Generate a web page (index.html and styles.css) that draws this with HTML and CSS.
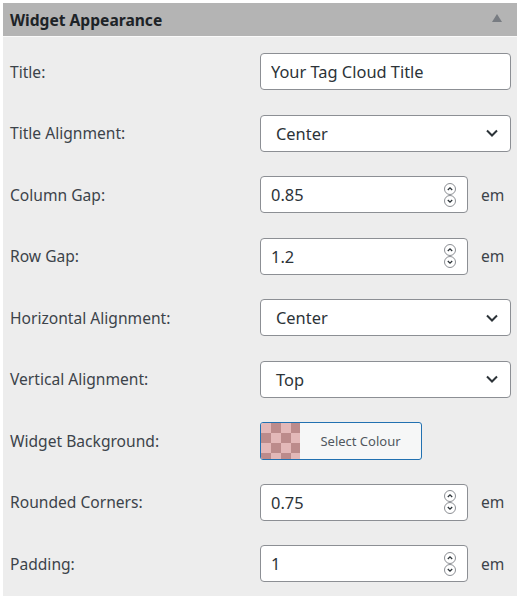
FILE: index.html
```html
<!DOCTYPE html>
<html>
<head>
<meta charset="utf-8">
<link rel="stylesheet" href="styles.css">
</head>
<body>
<div class="panel">
  <div class="panel-head">
    <h2 class="panel-title">Widget Appearance</h2>
    <svg class="toggle" width="10" height="8" viewBox="0 0 10 8"><path d="M5 0 L10 8 L0 8 Z" fill="#787c82"/></svg>
  </div>
  <div class="panel-body">
    <div class="row">
      <label class="label">Title:</label>
      <div class="field wide"><input class="text-input" type="text" value="Your Tag Cloud Title"></div>
    </div>
    <div class="row">
      <label class="label">Title Alignment:</label>
      <div class="field wide select"><span class="sel-val">Center</span>
        <svg class="chev" width="14" height="10" viewBox="0 0 14 10"><path d="M2 2.5 L7 7.5 L12 2.5" fill="none" stroke="#2c3338" stroke-width="2"/></svg></div>
    </div>
    <div class="row">
      <label class="label">Column Gap:</label>
      <div class="num-wrap">
        <div class="field num"><span class="num-val">0.85</span>
          <svg class="spin" width="14" height="26" viewBox="0 0 14 26"><rect x="1.5" y="1.5" width="11" height="11" rx="5.5" fill="none" stroke="#8c8f94"/><path d="M4.8 8 L7 5.8 L9.2 8" fill="none" stroke="#2c3338" stroke-width="1.3"/><rect x="1.5" y="13.5" width="11" height="11" rx="5.5" fill="none" stroke="#8c8f94"/><path d="M4.8 18 L7 20.2 L9.2 18" fill="none" stroke="#2c3338" stroke-width="1.3"/></svg>
        </div>
        <span class="unit">em</span>
      </div>
    </div>
    <div class="row">
      <label class="label">Row Gap:</label>
      <div class="num-wrap">
        <div class="field num"><span class="num-val">1.2</span>
          <svg class="spin" width="14" height="26" viewBox="0 0 14 26"><rect x="1.5" y="1.5" width="11" height="11" rx="5.5" fill="none" stroke="#8c8f94"/><path d="M4.8 8 L7 5.8 L9.2 8" fill="none" stroke="#2c3338" stroke-width="1.3"/><rect x="1.5" y="13.5" width="11" height="11" rx="5.5" fill="none" stroke="#8c8f94"/><path d="M4.8 18 L7 20.2 L9.2 18" fill="none" stroke="#2c3338" stroke-width="1.3"/></svg>
        </div>
        <span class="unit">em</span>
      </div>
    </div>
    <div class="row">
      <label class="label">Horizontal Alignment:</label>
      <div class="field wide select"><span class="sel-val">Center</span>
        <svg class="chev" width="14" height="10" viewBox="0 0 14 10"><path d="M2 2.5 L7 7.5 L12 2.5" fill="none" stroke="#2c3338" stroke-width="2"/></svg></div>
    </div>
    <div class="row">
      <label class="label">Vertical Alignment:</label>
      <div class="field wide select"><span class="sel-val">Top</span>
        <svg class="chev" width="14" height="10" viewBox="0 0 14 10"><path d="M2 2.5 L7 7.5 L12 2.5" fill="none" stroke="#2c3338" stroke-width="2"/></svg></div>
    </div>
    <div class="row">
      <label class="label">Widget Background:</label>
      <button class="colour-btn" type="button"><span class="swatch"></span><span class="colour-text">Select Colour</span></button>
    </div>
    <div class="row">
      <label class="label">Rounded Corners:</label>
      <div class="num-wrap">
        <div class="field num"><span class="num-val">0.75</span>
          <svg class="spin" width="14" height="26" viewBox="0 0 14 26"><rect x="1.5" y="1.5" width="11" height="11" rx="5.5" fill="none" stroke="#8c8f94"/><path d="M4.8 8 L7 5.8 L9.2 8" fill="none" stroke="#2c3338" stroke-width="1.3"/><rect x="1.5" y="13.5" width="11" height="11" rx="5.5" fill="none" stroke="#8c8f94"/><path d="M4.8 18 L7 20.2 L9.2 18" fill="none" stroke="#2c3338" stroke-width="1.3"/></svg>
        </div>
        <span class="unit">em</span>
      </div>
    </div>
    <div class="row">
      <label class="label">Padding:</label>
      <div class="num-wrap">
        <div class="field num"><span class="num-val">1</span>
          <svg class="spin" width="14" height="26" viewBox="0 0 14 26"><rect x="1.5" y="1.5" width="11" height="11" rx="5.5" fill="none" stroke="#8c8f94"/><path d="M4.8 8 L7 5.8 L9.2 8" fill="none" stroke="#2c3338" stroke-width="1.3"/><rect x="1.5" y="13.5" width="11" height="11" rx="5.5" fill="none" stroke="#8c8f94"/><path d="M4.8 18 L7 20.2 L9.2 18" fill="none" stroke="#2c3338" stroke-width="1.3"/></svg>
        </div>
        <span class="unit">em</span>
      </div>
    </div>
  </div>
</div>
</body>
</html>
```
FILE: styles.css
```css
html, body {
  margin: 0;
  padding: 0;
  background: #ffffff;
}
body {
  padding: 3px 3px 0 3px;
  font-family: "Noto Sans", "Open Sans", sans-serif;
  color: #3c434a;
}
.panel {
  width: 514px;
}
.panel-head {
  height: 34px;
  background: #b4b4b4;
  display: flex;
  align-items: center;
  justify-content: space-between;
  padding: 0 15px 0 7px;
  box-sizing: border-box;
  border-bottom: 1px solid #fafafa;
}
.panel-title {
  margin: 0;
  font-size: 15.6px;
  font-weight: 700;
  color: #1d2327;
}
.toggle {
  display: block;
  margin-top: -3px;
}
.panel-body {
  background: #ededed;
  padding: 16px 6px 14px 7px;
  display: flex;
  flex-direction: column;
  gap: 24.5px;
}
.row {
  display: flex;
  align-items: center;
  height: 37px;
}
.label {
  width: 250px;
  font-size: 15.6px;
  color: #3c434a;
}
.field {
  box-sizing: border-box;
  height: 37px;
  background: #fff;
  border: 1px solid #8c8f94;
  border-radius: 4px;
  display: flex;
  align-items: center;
  font-size: 16.4px;
  color: #2c3338;
}
.wide {
  width: 251px;
}
.text-input {
  border: 0;
  outline: 0;
  background: transparent;
  font: inherit;
  color: inherit;
  padding: 0 0 0 10px;
  width: 100%;
}
.select {
  justify-content: space-between;
  padding: 0 11px 0 15px;
}
.chev { display: block; }
.num-wrap {
  display: flex;
  align-items: center;
}
.num {
  width: 208px;
  padding: 0 10px 0 10px;
  justify-content: space-between;
}
.spin { display: block; }
.unit {
  margin-left: 13px;
  font-size: 15.6px;
  color: #3c434a;
}
.colour-btn {
  box-sizing: border-box;
  width: 162px;
  height: 38px;
  padding: 0;
  border: 1px solid #2271b1;
  border-radius: 3px;
  background: #f6f7f7;
  display: flex;
  align-items: stretch;
  overflow: hidden;
  font-family: inherit;
  cursor: pointer;
}
.swatch {
  width: 39px;
  background-color: #e3b8b8;
  background-image:
    linear-gradient(45deg, #bc8b8b 25%, transparent 25%, transparent 75%, #bc8b8b 75%),
    linear-gradient(45deg, #bc8b8b 25%, transparent 25%, transparent 75%, #bc8b8b 75%);
  background-size: 20px 20px;
  background-position: 0 0, 10px 10px;
}
.colour-text {
  flex: 1;
  display: flex;
  align-items: center;
  justify-content: center;
  font-size: 13px;
  color: #50575e;
}
```
